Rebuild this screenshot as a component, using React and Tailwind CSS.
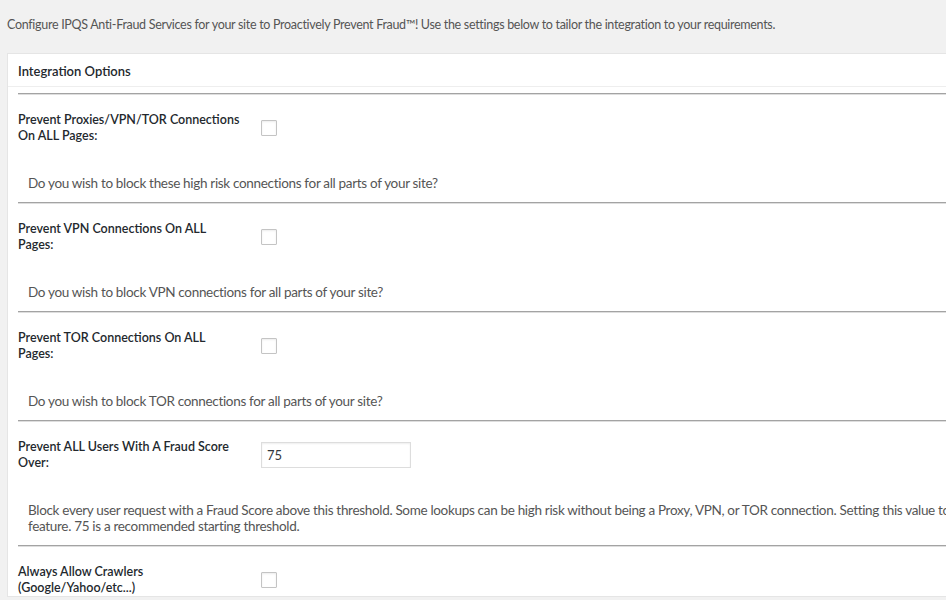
import React from "react";

function Hr() {
  return <div className="h-[2px] border-t border-b border-t-[#a3a3a3] border-b-[#dedede]" />;
}

function Checkbox() {
  return (
    <span className="block h-[16px] w-[16px] rounded-[1px] border border-[#c4c4c4] bg-white shadow-[inset_0_1px_2px_rgba(0,0,0,0.08)]" />
  );
}

function Row({ label, control, desc }) {
  return (
    <div>
      <div className="flex items-center pt-[17px]">
        <div className="w-[243px] shrink-0 whitespace-nowrap pr-[10px] font-semibold leading-[16px] tracking-normal text-[#23282d]">
          {label}
        </div>
        {control}
      </div>
      {desc && (
        <p className="mt-[31px] pb-[11px] pl-[10px] text-[13.5px] leading-[16px] tracking-[-0.32px] text-[#555]">{desc}</p>
      )}
      {desc && <Hr />}
    </div>
  );
}

export default function App() {
  return (
    <div className="h-[600px] w-full overflow-hidden bg-[#f1f1f1] font-['Lato',sans-serif] text-[12.5px] tracking-[-0.3px] text-[#444]">
      <div className="w-[1400px] pl-[7px]">
        <h1 className="-mt-[27px] h-[29px] text-[23px] leading-[29px] tracking-normal text-[#23282d]">
          IPQualityScore Proxy Detection Integration Settings
        </h1>
        <p className="mt-[15px] leading-[16px] text-[#555]">
          Configure IPQS Anti-Fraud Services for your site to Proactively Prevent Fraud™! Use the settings below to tailor the integration to your requirements.
        </p>
        <div className="mt-[20px] border border-[#e5e5e5] bg-white">
          <div className="flex h-[33px] items-center border-b border-[#eeeeee] px-[10px] pt-[3px] text-[13px] font-semibold tracking-normal text-[#23282d]">
            Integration Options
          </div>
          <div className="px-[10px] pt-[6px]">
            <Hr />
            <Row
              label={<>Prevent Proxies/VPN/TOR Connections<br />On ALL Pages:</>}
              control={<Checkbox />}
              desc="Do you wish to block these high risk connections for all parts of your site?"
            />
            <Row
              label={<>Prevent VPN Connections On ALL<br />Pages:</>}
              control={<Checkbox />}
              desc="Do you wish to block VPN connections for all parts of your site?"
            />
            <Row
              label={<>Prevent TOR Connections On ALL<br />Pages:</>}
              control={<Checkbox />}
              desc="Do you wish to block TOR connections for all parts of your site?"
            />
            <Row
              label={<>Prevent ALL Users With A Fraud Score<br />Over:</>}
              control={
                <input
                  type="text"
                  defaultValue="75"
                  className="h-[26px] w-[150px] border border-[#dddddd] bg-white px-[5px] text-[13px] tracking-normal text-[#32373c] shadow-[inset_0_1px_2px_rgba(0,0,0,0.07)] outline-none"
                />
              }
              desc={
                <>
                  Block every user request with a Fraud Score above this threshold. Some lookups can be high risk without being a Proxy, VPN, or TOR connection. Setting this value to 100 will disable this
                  <br />
                  feature. 75 is a recommended starting threshold.
                </>
              }
            />
            <Row label={<>Always Allow Crawlers<br />(Google/Yahoo/etc...)</>} control={<Checkbox />} />
          </div>
        </div>
      </div>
    </div>
  );
}
